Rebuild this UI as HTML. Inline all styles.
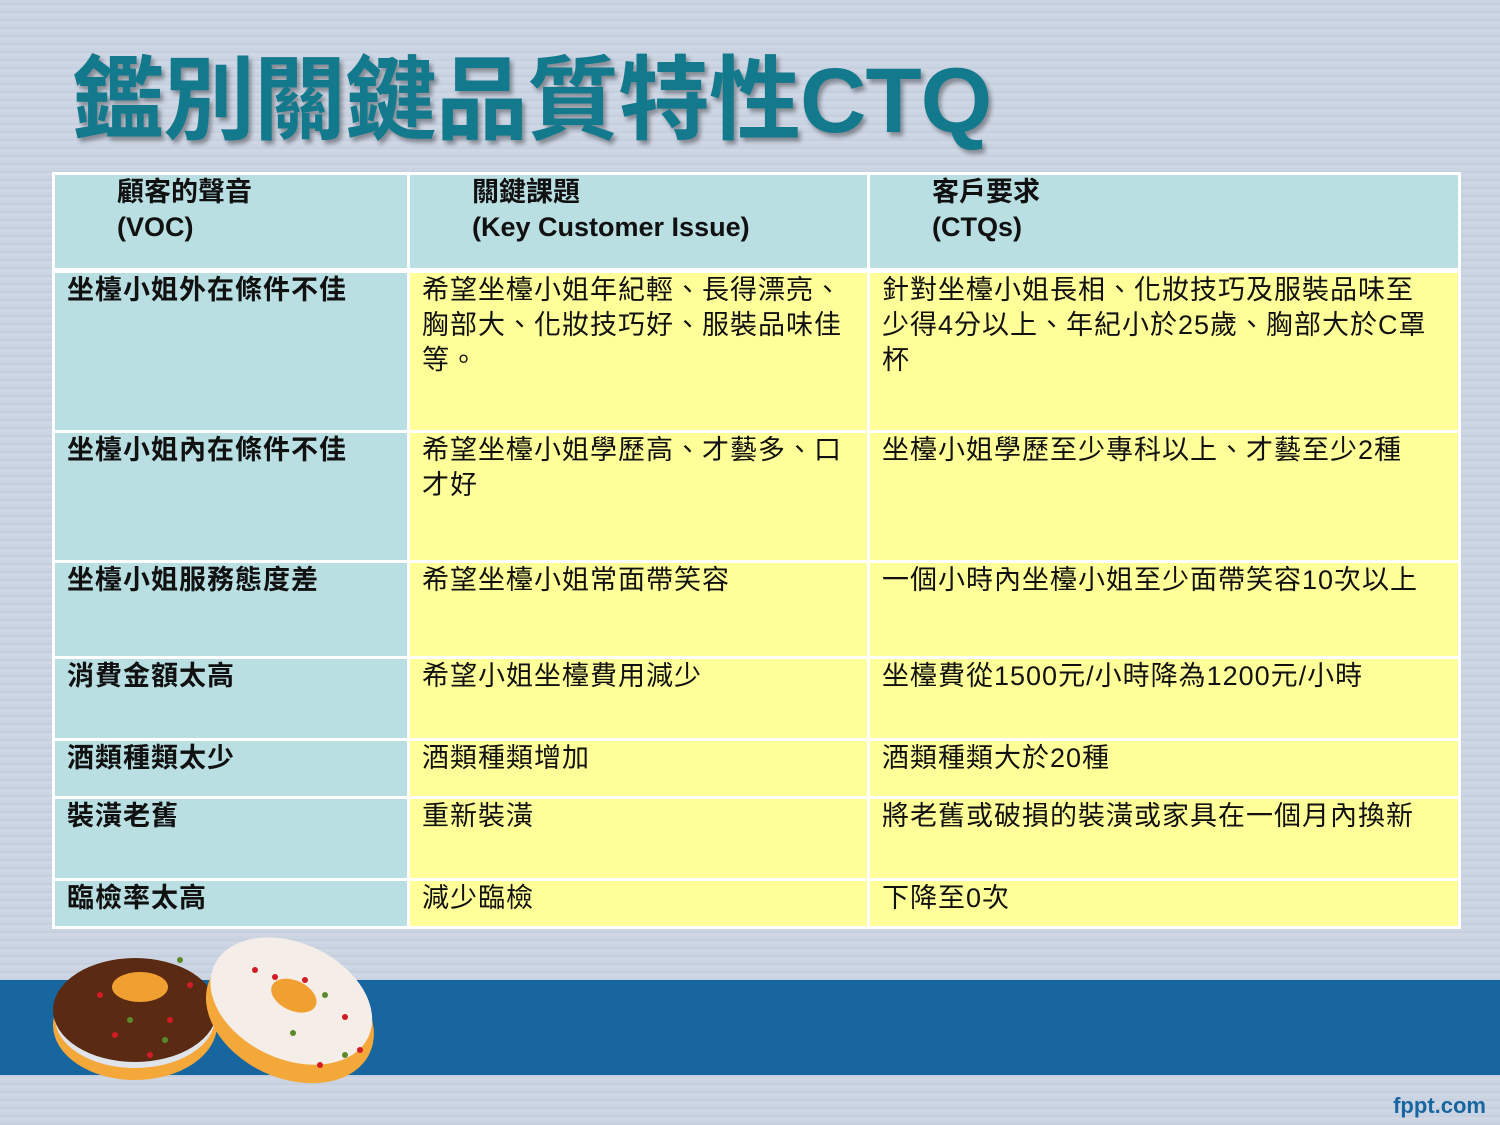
<!DOCTYPE html>
<html><head><meta charset="utf-8"><style>
body{margin:0;width:1500px;height:1125px;overflow:hidden;background:repeating-linear-gradient(180deg,#cbd4e3 0 3px,#c5cfde 3px 5px,#cfd7e5 5px 8px);position:relative;font-family:"Liberation Sans","Noto Sans CJK TC",sans-serif}
.title{position:absolute;left:72px;top:26px;font-size:92px;font-weight:bold;color:#127a8c;letter-spacing:-1px;text-shadow:3px 4px 4px rgba(0,0,0,.35);white-space:nowrap}
.band{position:absolute;left:0;top:980px;width:1500px;height:95px;background:#1866a0}
table{position:absolute;left:52px;top:172px;width:1406px;border-collapse:collapse;table-layout:fixed;font-size:27px;letter-spacing:1px;color:#111}
td{border:3px solid #fff;vertical-align:top;padding:0 10px 0 12px;line-height:35px;overflow:hidden}
td.b{background:#b9dfe3;font-weight:bold}
td.y{background:#ffff99}
td.c{padding-right:28px}
tr.h td{background:#b9dfe3;font-weight:bold;padding-left:62px;border-bottom-width:5px;letter-spacing:0}
.f{position:absolute;right:14px;bottom:6px;color:#1866a0;font-weight:bold;font-size:22px}
</style></head><body>
<div class="title">鑑別關鍵品質特性CTQ</div>
<div class="band"></div>
<table>
<colgroup><col style="width:355px"><col style="width:460px"><col style="width:591px"></colgroup>
<tr class="h" style="height:97px"><td>顧客的聲音<br>(VOC)</td><td>關鍵課題<br>(Key Customer Issue)</td><td>客戶要求<br>(CTQs)</td></tr>
<tr style="height:161px"><td class="b">坐檯小姐外在條件不佳</td><td class="y">希望坐檯小姐年紀輕、長得漂亮、胸部大、化妝技巧好、服裝品味佳等。</td><td class="y c">針對坐檯小姐長相、化妝技巧及服裝品味至少得4分以上、年紀小於25歲、胸部大於C罩杯</td></tr>
<tr style="height:130px"><td class="b">坐檯小姐內在條件不佳</td><td class="y">希望坐檯小姐學歷高、才藝多、口才好</td><td class="y c">坐檯小姐學歷至少專科以上、才藝至少2種</td></tr>
<tr style="height:96px"><td class="b">坐檯小姐服務態度差</td><td class="y">希望坐檯小姐常面帶笑容</td><td class="y c">一個小時內坐檯小姐至少面帶笑容10次以上</td></tr>
<tr style="height:82px"><td class="b">消費金額太高</td><td class="y">希望小姐坐檯費用減少</td><td class="y c">坐檯費從1500元/小時降為1200元/小時</td></tr>
<tr style="height:58px"><td class="b">酒類種類太少</td><td class="y">酒類種類增加</td><td class="y c">酒類種類大於20種</td></tr>
<tr style="height:82px"><td class="b">裝潢老舊</td><td class="y">重新裝潢</td><td class="y c">將老舊或破損的裝潢或家具在一個月內換新</td></tr>
<tr style="height:48px"><td class="b">臨檢率太高</td><td class="y">減少臨檢</td><td class="y c">下降至0次</td></tr>
</table>
<svg style="position:absolute;left:40px;top:925px" width="350" height="190">
<ellipse cx="95" cy="100" rx="82" ry="55" fill="#f4a83a"/>
<ellipse cx="95" cy="93" rx="80" ry="50" fill="#dfe3ea"/>
<ellipse cx="95" cy="85" rx="82" ry="52" fill="#5a2a12"/>
<ellipse cx="100" cy="62" rx="28" ry="15" fill="#f0a030"/>
<g fill="#d01c24"><circle cx="60" cy="70" r="3"/><circle cx="75" cy="110" r="3"/><circle cx="130" cy="95" r="3"/><circle cx="150" cy="60" r="3"/><circle cx="110" cy="130" r="3"/></g>
<g fill="#5a8a2a"><circle cx="90" cy="95" r="3"/><circle cx="125" cy="115" r="3"/><circle cx="140" cy="35" r="3"/></g>
<g transform="rotate(25 255 80)"><ellipse cx="255" cy="92" rx="88" ry="62" fill="#f4a83a"/>
<ellipse cx="250" cy="78" rx="85" ry="58" fill="#f5ede8"/>
<ellipse cx="250" cy="72" rx="24" ry="15" fill="#f0a030"/></g>
<g fill="#d01c24"><circle cx="215" cy="45" r="3"/><circle cx="235" cy="52" r="3"/><circle cx="265" cy="55" r="3"/><circle cx="305" cy="92" r="3"/><circle cx="280" cy="140" r="3"/><circle cx="320" cy="125" r="3"/></g>
<g fill="#5a8a2a"><circle cx="253" cy="108" r="3"/><circle cx="285" cy="70" r="3"/><circle cx="305" cy="130" r="3"/></g>
</svg>
<div class="f">fppt.com</div>
</body></html>
